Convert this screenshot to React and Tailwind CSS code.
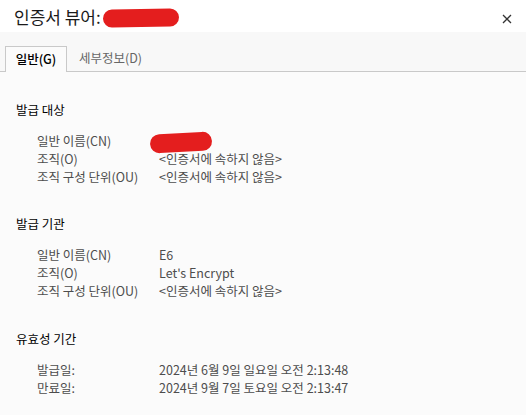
import React from 'react';

const font = { fontFamily: '"Noto Sans CJK KR", "Noto Sans", sans-serif' };

function Blob({ className }) {
    return <span className={`inline-block bg-[#e41e1e] rounded-full ${className}`} />;
}

function Row({ label, children }) {
    return (
        <div className="flex leading-[18px] h-[18px]">
            <div className="w-[122px] shrink-0">{label}</div>
            <div className="relative">{children}</div>
        </div>
    );
}

function Section({ title, rows, className = '' }) {
    return (
        <div className={className}>
            <h2 className="text-black leading-[20px] mb-3">{title}</h2>
            <div className="pl-[21px] text-[#4d4d4d]">
                {rows.map((r, i) => (
                    <Row key={i} label={r[0]}>{r[1]}</Row>
                ))}
            </div>
        </div>
    );
}

export default function App() {
    const none = '<인증서에 속하지 않음>';

    return (
        <div className="w-[526px] h-[415px] bg-[#fbfbfb] flex flex-col overflow-hidden text-[12.5px]" style={font}>
            {/* title bar */}
            <div className="h-[32px] bg-white flex items-center pl-[14px] pr-[14px] shrink-0">
                <span className="text-[17px] text-[#1a1a1a] leading-none">인증서 뷰어:</span>
                <Blob className="w-[76px] h-[18px] ml-[2px] mt-[3px] -rotate-1" />
                <div className="flex-1" />
                <svg width="10" height="10" viewBox="0 0 10 10" className="mt-[5px]">
                    <path d="M1 1L9 9M9 1L1 9" stroke="#333" strokeWidth="1.3" />
                </svg>
            </div>

            {/* tabs */}
            <div className="h-[40px] bg-[#f8f8f8] flex items-end shrink-0 border-b border-[#c9c9c9] pl-[5px]">
                <div className="h-[26px] w-[62px] bg-[#fbfbfb] border border-b-0 border-[#c9c9c9] -mb-px flex items-center justify-center text-black font-medium">
                    일반(G)
                </div>
                <div className="h-[26px] flex items-center pl-[12px] text-[#666]">세부정보(D)</div>
            </div>

            {/* content */}
            <div className="pl-[16px] pt-[28px]">
                <Section
                    title="발급 대상"
                    rows={[
                        ['일반 이름(CN)', <Blob className="absolute left-[-9px] top-[1px] w-[62px] h-[19px] -rotate-3" />],
                        ['조직(O)', none],
                        ['조직 구성 단위(OU)', none],
                    ]}
                />
                <Section
                    title="발급 기관"
                    className="mt-[28px]"
                    rows={[
                        ['일반 이름(CN)', 'E6'],
                        ['조직(O)', "Let's Encrypt"],
                        ['조직 구성 단위(OU)', none],
                    ]}
                />
                <Section
                    title="유효성 기간"
                    className="mt-[29px]"
                    rows={[
                        ['발급일:', '2024년 6월 9일 일요일 오전 2:13:48'],
                        ['만료일:', '2024년 9월 7일 토요일 오전 2:13:47'],
                    ]}
                />
            </div>
        </div>
    );
}
